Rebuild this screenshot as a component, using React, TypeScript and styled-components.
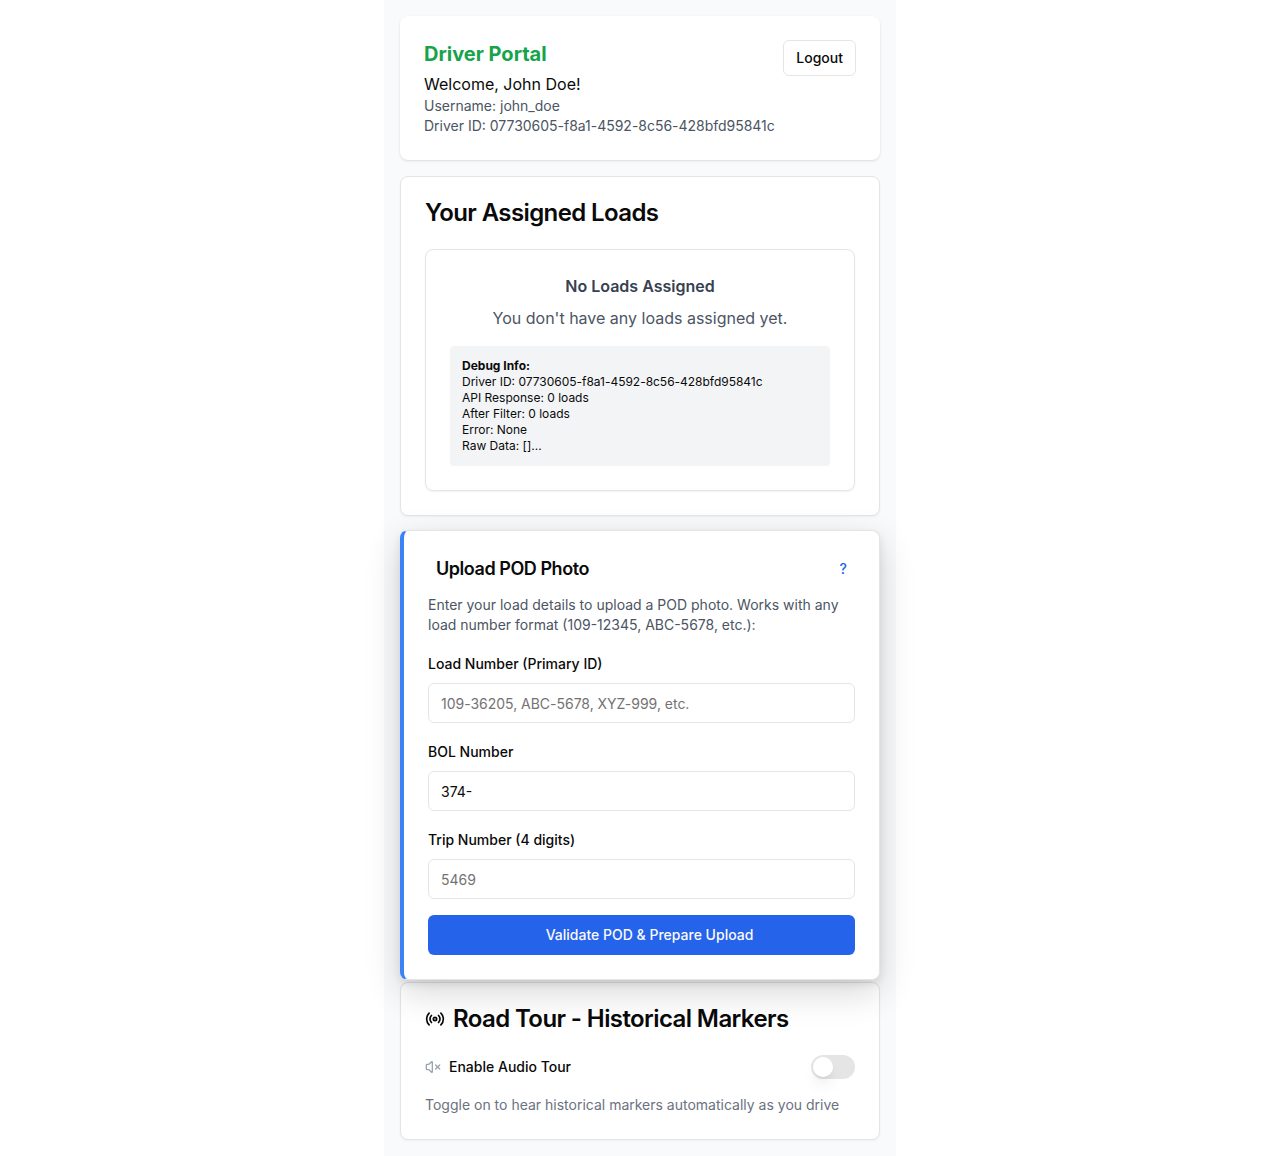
import React, { useState } from "react";
import styled, { createGlobalStyle, css } from "styled-components";
import { Radio, VolumeX } from "lucide-react";

const GlobalStyle = createGlobalStyle`
  *, *::before, *::after { box-sizing: border-box; }
  html { overflow: hidden; }
  body {
    margin: 0;
    background: #ffffff;
    color: #0a0a0a;
    font-family: Inter, "Liberation Sans", sans-serif;
    font-size: 16px;
    line-height: 24px;
  }
  h1, h2, h3, p { margin: 0; }
  button, input { font-family: inherit; }
`;

const Page = styled.div`
  width: 1280px;
  display: flex;
  justify-content: center;
`;

const Column = styled.main`
  width: 512px;
  min-height: 1156px;
  padding: 16px;
  display: flex;
  flex-direction: column;
  gap: 16px;
  background: #f9fafb;
`;

const Header = styled.header`
  display: flex;
  justify-content: space-between;
  align-items: flex-start;
  padding: 24px;
  background: #ffffff;
  border-radius: 8px;
  box-shadow: 0 1px 3px rgba(0, 0, 0, 0.1), 0 1px 2px -1px rgba(0, 0, 0, 0.1);
`;

const PortalTitle = styled.h1`
  margin-bottom: 4px;
  font-size: 20px;
  line-height: 28px;
  font-weight: 700;
  color: #16a34a;
`;

const Small = styled.p<{ $muted?: boolean }>`
  font-size: 14px;
  line-height: 20px;
  color: ${(p) => (p.$muted ? "#6b7280" : "#4b5563")};
`;

const Identifier = styled.span`
  letter-spacing: -0.02px;
`;

const OutlineButton = styled.button`
  height: 36px;
  padding: 0 12px;
  border: 1px solid #e5e5e5;
  border-radius: 6px;
  background: #ffffff;
  color: #0a0a0a;
  font-size: 14px;
  line-height: 20px;
  font-weight: 500;
`;

const Card = styled.section<{ $raised?: boolean }>`
  padding: 24px;
  border: 1px solid #e5e5e5;
  border-radius: 8px;
  background: #ffffff;
  box-shadow: 0 1px 2px rgba(0, 0, 0, 0.05);
  ${(p) =>
    p.$raised &&
    css`
      border-left: 4px solid #3b82f6;
      transform: translateY(-2px);
      box-shadow: 0 12px 36px rgba(0, 0, 0, 0.16), 0 4px 8px rgba(0, 0, 0, 0.09);
    `}
`;

const CardStack = styled.div`
  display: flex;
  flex-direction: column;
`;

const CardTitle = styled.h2`
  display: flex;
  align-items: center;
  gap: 8px;
  margin-bottom: 24px;
  font-size: 24px;
  line-height: 24px;
  font-weight: 600;
  letter-spacing: -0.6px;
`;

const EmptyState = styled(Card)`
  text-align: center;
`;

const EmptyTitle = styled.h3`
  margin-bottom: 8px;
  font-size: 16px;
  line-height: 24px;
  font-weight: 600;
  color: #374151;
`;

const EmptyText = styled.p`
  color: #4b5563;
`;

const DebugBox = styled.div`
  margin-top: 16px;
  padding: 12px;
  border-radius: 4px;
  background: #f3f4f6;
  font-size: 12px;
  line-height: 16px;
  text-align: left;
`;

const UploadHeader = styled.div`
  display: flex;
  justify-content: space-between;
  align-items: center;
  height: 28px;
  margin-bottom: 12px;
  padding-left: 8px;
`;

const UploadTitle = styled.h2`
  font-size: 18px;
  line-height: 28px;
  font-weight: 600;
  letter-spacing: -0.45px;
`;

const HelpButton = styled.button`
  height: 28px;
  padding: 0 8px;
  border: 0;
  background: transparent;
  color: #2563eb;
  font-size: 14px;
  line-height: 20px;
  font-weight: 500;
`;

const Form = styled.form`
  display: flex;
  flex-direction: column;
  gap: 16px;
`;

const Label = styled.label`
  font-size: 14px;
  line-height: 14px;
  font-weight: 500;
`;

const Input = styled.input`
  display: block;
  width: 100%;
  height: 40px;
  margin-top: 8px;
  padding: 8px 12px;
  border: 1px solid #e5e5e5;
  border-radius: 6px;
  background: #ffffff;
  color: #0a0a0a;
  font-size: 14px;
  line-height: 20px;
  &::placeholder {
    color: #737373;
    letter-spacing: -0.02px;
  }
`;

const SubmitButton = styled.button`
  height: 40px;
  padding: 0 16px 0 32px;
  border: 0;
  border-radius: 6px;
  background: #2563eb;
  color: #fafafa;
  font-size: 14px;
  line-height: 20px;
  font-weight: 500;
`;

const ToggleRow = styled.div`
  display: flex;
  align-items: center;
  justify-content: space-between;
  height: 24px;
  margin-bottom: 16px;
`;

const ToggleLabel = styled.div`
  display: flex;
  align-items: center;
  gap: 8px;
  font-size: 14px;
  font-weight: 500;
  svg { color: #9ca3af; }
`;

const Switch = styled.button<{ $on: boolean }>`
  display: flex;
  align-items: center;
  width: 44px;
  height: 24px;
  padding: 2px;
  border: 0;
  border-radius: 12px;
  background: ${(p) => (p.$on ? "#171717" : "#e5e5e5")};
  justify-content: ${(p) => (p.$on ? "flex-end" : "flex-start")};
`;

const Thumb = styled.span`
  width: 20px;
  height: 20px;
  border-radius: 50%;
  background: #ffffff;
  box-shadow: 0 10px 15px -3px rgba(0, 0, 0, 0.1), 0 4px 6px -4px rgba(0, 0, 0, 0.1);
`;

const driverId = "07730605-f8a1-4592-8c56-428bfd95841c";

const debugLines = [
  "API Response: 0 loads",
  "After Filter: 0 loads",
  "Error: None",
  "Raw Data: []...",
];

const fields = [
  { id: "load", label: "Load Number (Primary ID)", placeholder: "109-36205, ABC-5678, XYZ-999, etc.", value: "" },
  { id: "bol", label: "BOL Number", placeholder: "", value: "374-" },
  { id: "trip", label: "Trip Number (4 digits)", placeholder: "5469", value: "" },
];

export default function App() {
  const [audio, setAudio] = useState(false);

  return (
    <>
      <GlobalStyle />
      <Page>
        <Column>
          <Header>
            <div>
              <PortalTitle>Driver Portal</PortalTitle>
              <p>Welcome, John Doe!</p>
              <Small>Username: john_doe</Small>
              <Small>
                Driver ID: <Identifier>{driverId}</Identifier>
              </Small>
            </div>
            <OutlineButton>Logout</OutlineButton>
          </Header>

          <Card>
            <CardTitle>Your Assigned Loads</CardTitle>
            <EmptyState as="div">
              <EmptyTitle>No Loads Assigned</EmptyTitle>
              <EmptyText>You don't have any loads assigned yet.</EmptyText>
              <DebugBox>
                <strong>Debug Info:</strong>
                <div>
                  Driver ID: <Identifier>{driverId}</Identifier>
                </div>
                {debugLines.map((line) => (
                  <div key={line}>{line}</div>
                ))}
              </DebugBox>
            </EmptyState>
          </Card>

          <CardStack>
            <Card $raised>
              <UploadHeader>
                <UploadTitle>Upload POD Photo</UploadTitle>
                <HelpButton>?</HelpButton>
              </UploadHeader>
              <Form onSubmit={(e) => e.preventDefault()}>
                <Small>
                  Enter your load details to upload a POD photo. Works with any load number format
                  (109-12345, ABC-5678, etc.):
                </Small>
                {fields.map((f) => (
                  <div key={f.id}>
                    <Label htmlFor={f.id}>{f.label}</Label>
                    <Input id={f.id} placeholder={f.placeholder} defaultValue={f.value} />
                  </div>
                ))}
                <SubmitButton>Validate POD &amp; Prepare Upload</SubmitButton>
              </Form>
            </Card>

            <Card>
              <CardTitle>
                <Radio size={20} />
                Road Tour - Historical Markers
              </CardTitle>
              <ToggleRow>
                <ToggleLabel>
                  <VolumeX size={16} />
                  Enable Audio Tour
                </ToggleLabel>
                <Switch
                  type="button"
                  role="switch"
                  aria-checked={audio}
                  aria-label="Enable Audio Tour"
                  $on={audio}
                  onClick={() => setAudio(!audio)}
                >
                  <Thumb />
                </Switch>
              </ToggleRow>
              <Small $muted>Toggle on to hear historical markers automatically as you drive</Small>
            </Card>
          </CardStack>
        </Column>
      </Page>
    </>
  );
}
